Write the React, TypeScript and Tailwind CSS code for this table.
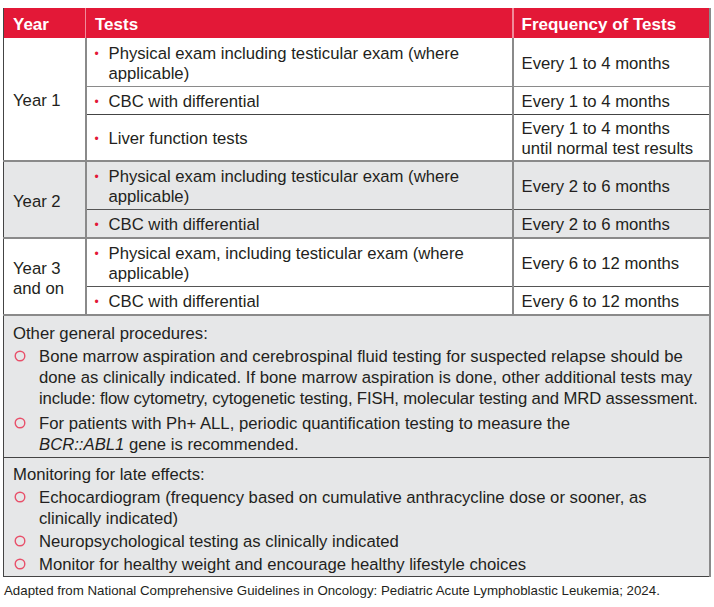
import React from "react";

const Dot = () => (
  <span className="inline-block w-[14px] shrink-0 text-[#e31837] text-[12px] leading-[20px]">•</span>
);

const Circ = () => (
  <span className="w-[26px] shrink-0 flex pt-[4px] pl-[1px]">
    <svg width="12" height="12" viewBox="0 0 12 12">
      <circle cx="6" cy="6" r="4.8" fill="none" stroke="#e8506a" strokeWidth="1.4" />
    </svg>
  </span>
);

const Test = ({ children }: { children: React.ReactNode }) => (
  <div className="flex pl-[8px] pr-2">
    <Dot />
    <span>{children}</span>
  </div>
);

const Item = ({ lines }: { lines: React.ReactNode[] }) => (
  <div className="flex">
    <Circ />
    <div className="flex flex-col">
      {lines.map((l, i) => (
        <span key={i} className="whitespace-nowrap">{l}</span>
      ))}
    </div>
  </div>
);

export default function App() {
  const yearCell = "border-r-2 border-[#8a8a8a] pl-[9px] pt-[4px] align-middle";
  const freqCell = "pl-[8px] pt-[4px] align-middle";
  const testCell = "border-r-2 border-[#8a8a8a] pt-[4px]";
  return (
    <div
      className="w-[714px] h-[607px] bg-white text-[#231f20] text-[16.7px] leading-[20px]"
      style={{ fontFamily: '"Liberation Sans", Arial, sans-serif' }}
    >
      <div className="pt-[8px] pl-[3px]">
        <table className="w-[706px] border-collapse table-fixed border-l border-l-[#444] border-r-2 border-r-[#8a8a8a]">
          <colgroup>
            <col className="w-[82px]" />
            <col className="w-[427px]" />
            <col className="w-[197px]" />
          </colgroup>
          <thead>
            <tr className="bg-[#e31837] text-white font-bold text-[17px] h-[30px]">
              <th className="text-left pl-[9px] pt-[3px] border-r border-r-[#f08a9a]">Year</th>
              <th className="text-left pl-[9px] pt-[3px] border-r-2 border-r-[#f08a9a]">Tests</th>
              <th className="text-left pl-[8px] pt-[3px]">Frequency of Tests</th>
            </tr>
          </thead>
          <tbody>
            <tr className="h-[48px] border-b border-[#8a8a8a]">
              <td rowSpan={3} className={yearCell}>Year 1</td>
              <td className={testCell}><Test>Physical exam including testicular exam (where applicable)</Test></td>
              <td className={freqCell}>Every 1 to 4 months</td>
            </tr>
            <tr className="h-[28px] border-b border-[#444]">
              <td className={testCell}><Test>CBC with differential</Test></td>
              <td className={freqCell}>Every 1 to 4 months</td>
            </tr>
            <tr className="h-[47px] border-b-2 border-[#8a8a8a]">
              <td className={testCell}><Test>Liver function tests</Test></td>
              <td className={freqCell}>Every 1 to 4 months<br />until normal test results</td>
            </tr>
            <tr className="h-[48px] bg-[#e6e7e8] border-b border-[#555]">
              <td rowSpan={2} className={yearCell}>Year 2</td>
              <td className={testCell}><Test>Physical exam including testicular exam (where applicable)</Test></td>
              <td className={freqCell}>Every 2 to 6 months</td>
            </tr>
            <tr className="h-[29px] bg-[#e6e7e8] border-b-2 border-[#8a8a8a]">
              <td className={testCell}><Test>CBC with differential</Test></td>
              <td className={freqCell}>Every 2 to 6 months</td>
            </tr>
            <tr className="h-[48px] border-b border-[#555]">
              <td rowSpan={2} className={yearCell}>Year 3<br />and on</td>
              <td className={testCell}><Test>Physical exam, including testicular exam (where applicable)</Test></td>
              <td className={freqCell}>Every 6 to 12 months</td>
            </tr>
            <tr className="h-[29px] border-b-2 border-[#8a8a8a]">
              <td className={testCell}><Test>CBC with differential</Test></td>
              <td className={freqCell}>Every 6 to 12 months</td>
            </tr>
            <tr className="bg-[#e6e7e8] border-b border-[#444]">
              <td colSpan={3} className="pl-[9px] pr-[2px] pt-[7px] pb-[2px] leading-[21px] overflow-hidden">
                <div>Other general procedures:</div>
                <div className="mt-[2px]">
                  <Item
                    lines={[
                      "Bone marrow aspiration and cerebrospinal fluid testing for suspected relapse should be",
                      "done as clinically indicated. If bone marrow aspiration is done, other additional tests may",
                      <span className="tracking-[-0.14px]">include: flow cytometry, cytogenetic testing, FISH, molecular testing and MRD assessment.</span>,
                    ]}
                  />
                </div>
                <div className="mt-[4px]">
                  <Item
                    lines={[
                      "For patients with Ph+ ALL, periodic quantification testing to measure the",
                      <><i>BCR::ABL1</i> gene is recommended.</>,
                    ]}
                  />
                </div>
              </td>
            </tr>
            <tr className="bg-[#e6e7e8] border-b border-[#444]">
              <td colSpan={3} className="pl-[9px] pr-[2px] pt-[6px] pb-[1px] leading-[21px]">
                <div>Monitoring for late effects:</div>
                <div className="mt-[2px]">
                  <Item lines={["Echocardiogram (frequency based on cumulative anthracycline dose or sooner, as", "clinically indicated)"]} />
                </div>
                <div className="mt-[2px]">
                  <Item lines={["Neuropsychological testing as clinically indicated"]} />
                </div>
                <div className="mt-[2px]">
                  <Item lines={["Monitor for healthy weight and encourage healthy lifestyle choices"]} />
                </div>
              </td>
            </tr>
          </tbody>
        </table>
        <div className="mt-[6px] text-[13.3px] leading-[16px] pl-[1px] whitespace-nowrap">
          Adapted from National Comprehensive Guidelines in Oncology: Pediatric Acute Lymphoblastic Leukemia; 2024.
        </div>
      </div>
    </div>
  );
}
